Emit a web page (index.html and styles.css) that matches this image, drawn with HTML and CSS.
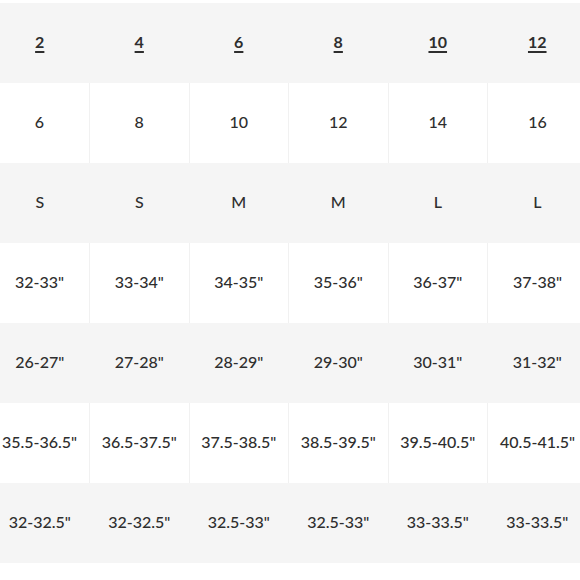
FILE: index.html
```html
<!DOCTYPE html>
<html>
<head>
<meta charset="utf-8">
<link rel="stylesheet" href="styles.css">
</head>
<body>
<div class="wrap">
<table class="sizes">
<tr class="grey head"><td><span>2</span></td><td><span>4</span></td><td><span>6</span></td><td><span>8</span></td><td><span>10</span></td><td><span>12</span></td></tr>
<tr class="white"><td>6</td><td>8</td><td>10</td><td>12</td><td>14</td><td>16</td></tr>
<tr class="grey"><td>S</td><td>S</td><td>M</td><td>M</td><td>L</td><td>L</td></tr>
<tr class="white"><td>32-33"</td><td>33-34"</td><td>34-35"</td><td>35-36"</td><td>36-37"</td><td>37-38"</td></tr>
<tr class="grey"><td>26-27"</td><td>27-28"</td><td>28-29"</td><td>29-30"</td><td>30-31"</td><td>31-32"</td></tr>
<tr class="white"><td>35.5-36.5"</td><td>36.5-37.5"</td><td>37.5-38.5"</td><td>38.5-39.5"</td><td>39.5-40.5"</td><td>40.5-41.5"</td></tr>
<tr class="grey"><td>32-32.5"</td><td>32-32.5"</td><td>32.5-33"</td><td>32.5-33"</td><td>33-33.5"</td><td>33-33.5"</td></tr>
</table>
</div>
</body>
</html>
```
FILE: styles.css
```css
html, body {
  margin: 0;
  padding: 0;
  background: #ffffff;
  overflow: hidden;
}
.wrap {
  padding-top: 3px;
  margin-left: -10px;
  width: 597px;
}
.sizes {
  width: 597px;
  border-collapse: collapse;
  table-layout: fixed;
  font-family: Lato, "Open Sans", sans-serif;
  font-size: 16px;
  font-weight: 500;
  color: #2e2e2e;
}
.sizes td {
  height: 80px;
  box-sizing: border-box;
  padding: 0 0 3px 0;
  text-align: center;
  vertical-align: middle;
}
.grey td {
  background: #f5f5f5;
}
.white td {
  background: #ffffff;
  border-left: 1px solid #f1f1f1;
}
.white td:first-child {
  border-left: none;
}
.head td span {
  font-weight: 700;
  text-decoration: underline;
  text-decoration-thickness: 2px;
  text-underline-offset: 3px;
}
```
